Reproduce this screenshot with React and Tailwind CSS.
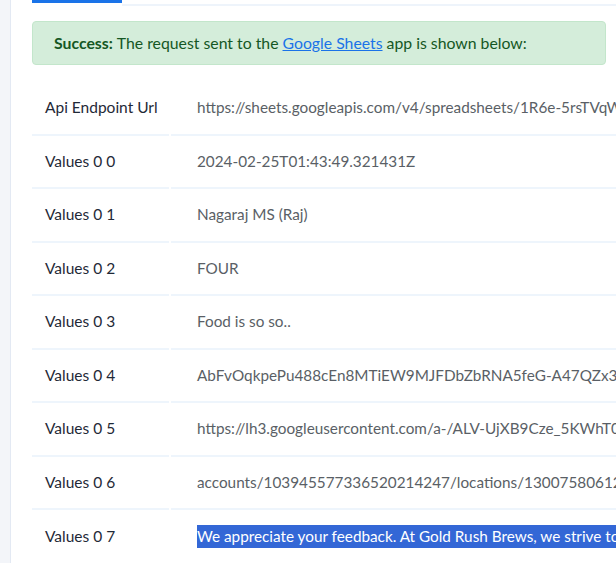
const rows = [
  ["Api Endpoint Url", "https://sheets.googleapis.com/v4/spreadsheets/1R6e-5rsTVqWbX9kLmA2pQ7sYd3FhJ0uNcZe/values/Sheet1!A1:append"],
  ["Values 0 0", "2024-02-25T01:43:49.321431Z"],
  ["Values 0 1", "Nagaraj MS (Raj)"],
  ["Values 0 2", "FOUR"],
  ["Values 0 3", "Food is so so.."],
  ["Values 0 4", "AbFvOqkpePu488cEn8MTiEW9MJFDbZbRNA5feG-A47QZx3LmQ"],
  ["Values 0 5", "https://lh3.googleusercontent.com/a-/ALV-UjXB9Cze_5KWhT0p"],
  ["Values 0 6", "accounts/103945577336520214247/locations/13007580612345"],
];

export default function App() {
  return (
    <div
      className="w-[616px] h-[563px] overflow-hidden flex bg-white"
      style={{ fontFamily: "Lato, 'Open Sans', sans-serif" }}
    >
      <div className="w-[11px] shrink-0 bg-[#f3f5f9] border-r border-[#e3e9f3]" />
      <div className="flex-1 min-w-0 pl-[21px]">
        <div className="flex h-[6px]">
          <div className="w-[90px] h-[3px] bg-[#1a73e8]" />
          <div className="flex-1 h-[6px] flex flex-col">
            <div className="h-[4px]" />
            <div className="h-[2px] bg-[#eef4fb]" />
          </div>
        </div>
        <div className="mt-[15px] mr-[10px] h-[44px] rounded-[4px] bg-[#d4edda] border border-[#c3e6cb] flex items-center pl-[21px] text-[15.8px] text-[#155724] whitespace-nowrap">
          <span className="font-bold">Success:</span>
          <span className="ml-[4px]">The request sent to the </span>
          <span className="ml-[4px] text-[#1a73e8] underline">Google Sheets</span>
          <span className="ml-[4px]">app is shown below:</span>
        </div>
        <div className="mt-[17px] flex flex-col">
          {rows.map(([k, v]) => (
            <div key={k} className="flex h-[53.5px]">
              <div className="w-[137px] shrink-0 border-b-2 border-[#eef5fc] flex items-center pl-[13px] text-[15.5px] text-[#1f2937] whitespace-nowrap">
                {k}
              </div>
              <div className="ml-[2px] flex-1 min-w-0 border-b-2 border-[#eef5fc] flex items-center pl-[26px] text-[15.3px] text-[#5a5f66] whitespace-nowrap overflow-hidden">
                {v}
              </div>
            </div>
          ))}
          <div className="flex h-[53px]">
            <div className="w-[137px] shrink-0 flex items-center pl-[13px] text-[15.5px] text-[#1f2937] whitespace-nowrap">
              Values 0 7
            </div>
            <div className="ml-[2px] flex-1 min-w-0 flex items-center pl-[26px] text-[15.3px] whitespace-nowrap overflow-hidden">
              <span className="bg-[#3367d6] text-white">
                We appreciate your feedback. At Gold Rush Brews, we strive to serve the best
              </span>
            </div>
          </div>
        </div>
      </div>
    </div>
  );
}
